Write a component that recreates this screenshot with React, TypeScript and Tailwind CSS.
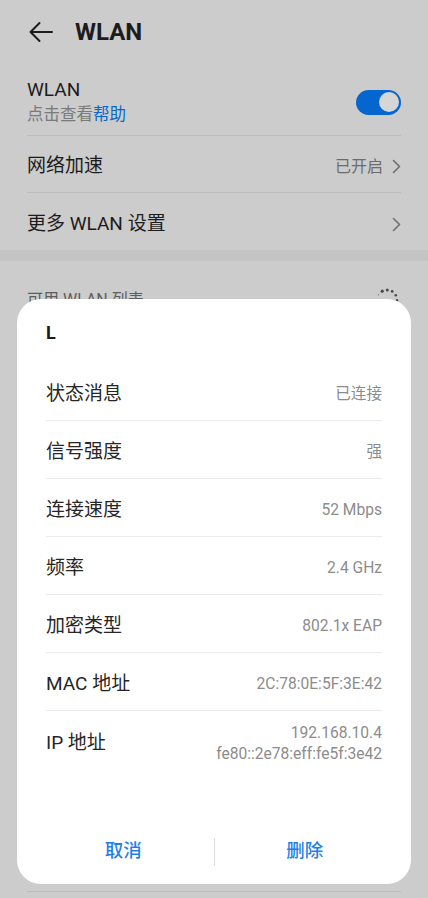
import type { ReactNode } from 'react';

const font = "font-['Roboto','Noto_Sans_CJK_SC',sans-serif]";

function Chevron() {
  return (
    <svg width="9" height="15" viewBox="0 0 9 15" fill="none" className="shrink-0">
      <path d="M1.5 1.5 L7.5 7.5 L1.5 13.5" stroke="#6f6f6f" strokeWidth="1.6" strokeLinecap="round" strokeLinejoin="round" />
    </svg>
  );
}

function Spinner() {
  const dots = Array.from({ length: 12 }, (_, i) => i);
  return (
    <svg width="24" height="24" viewBox="0 0 24 24">
      {dots.map((i) => {
        const a = (i / 12) * Math.PI * 2 - Math.PI / 2;
        const r = 1.6 - i * 0.1;
        return (
          <circle key={i} cx={12 + Math.cos(a - 0.5) * 10} cy={12 + Math.sin(a - 0.5) * 10} r={Math.max(r, 0.5)} fill="#4a4a4a" />
        );
      })}
    </svg>
  );
}

function InfoRow({ label, children, last }: { label: string; children: ReactNode; last?: boolean }) {
  return (
    <div className={`flex items-center justify-between pt-[5px] ${last ? 'h-[60px]' : 'h-[58px] border-b border-[#ebebeb]'}`}>
      <span className="text-[19px] text-[#262626]">{label}</span>
      <div className="text-right text-[15.6px] leading-[21px] text-[#8c8c8c]">{children}</div>
    </div>
  );
}

export default function App() {
  return (
    <div className={`relative flex h-[898px] flex-col overflow-hidden bg-[#cccccc] ${font}`}>
      {/* header */}
      <div className="flex h-[64px] shrink-0 items-center gap-[22px] px-[28px]">
        <svg width="25" height="24" viewBox="0 0 25 24" fill="none">
          <path d="M24 12H2.5 M11.5 3 L2.5 12 L11.5 21" stroke="#1c1c1c" strokeWidth="2" strokeLinecap="round" strokeLinejoin="round" />
        </svg>
        <h1 className="text-[24px] font-bold text-[#1c1c1c]">WLAN</h1>
      </div>

      {/* settings */}
      <div className="mx-[27px] flex shrink-0 flex-col">
        <div className="flex items-center justify-between border-b border-[#bdbdbd] pt-[15px] pb-[10px]">
          <div className="flex flex-col gap-[4px]">
            <span className="text-[19px] leading-[22px] text-[#1c1c1c]">WLAN</span>
            <span className="text-[16.5px] leading-[20px] text-[#7a7a7a]">
              点击查看<span className="text-[#0a66cc]">帮助</span>
            </span>
          </div>
          <div className="flex h-[25px] w-[45px] items-center justify-end rounded-full bg-[#0666d0] px-[2.5px]">
            <div className="h-[20px] w-[20px] rounded-full bg-[#d6d6d6]" />
          </div>
        </div>
        <div className="flex h-[57px] items-center justify-between border-b border-[#bdbdbd] pt-[5px]">
          <span className="text-[19px] text-[#1c1c1c]">网络加速</span>
          <div className="flex items-center gap-[9px]">
            <span className="text-[16px] text-[#6c6c6c]">已开启</span>
            <Chevron />
          </div>
        </div>
        <div className="flex h-[57px] items-center justify-between pt-[5px]">
          <span className="text-[19px] text-[#1c1c1c]">更多 WLAN 设置</span>
          <Chevron />
        </div>
      </div>

      <div className="h-[11px] shrink-0 bg-[#c4c4c4]" />

      {/* available list header (behind dialog) */}
      <div className="mx-[27px] flex shrink-0 items-center justify-between pt-[27px]">
        <span className="text-[16px] leading-[22px] text-[#5e5e5e]">可用 WLAN 列表</span>
        <div className="mr-[2px]">
          <Spinner />
        </div>
      </div>

      <div className="flex-1" />
      <div className="mx-[27px] mb-[6px] shrink-0 border-b border-[#bdbdbd]" />

      {/* dialog */}
      <div className="absolute left-[17px] top-[299px] flex h-[585px] w-[394px] flex-col rounded-[24px] bg-white">
        <div className="px-[29px] pt-[22px] pb-[18px]">
          <h2 className="text-[18px] font-bold leading-[24px] text-[#1a1a1a]">L</h2>
        </div>
        <div className="flex flex-col px-[29px]">
          <InfoRow label="状态消息">已连接</InfoRow>
          <InfoRow label="信号强度">强</InfoRow>
          <InfoRow label="连接速度">52 Mbps</InfoRow>
          <InfoRow label="频率">2.4 GHz</InfoRow>
          <InfoRow label="加密类型">802.1x EAP</InfoRow>
          <InfoRow label="MAC 地址">2C:78:0E:5F:3E:42</InfoRow>
          <InfoRow label="IP 地址" last>
            <div>192.168.10.4</div>
            <div>fe80::2e78:eff:fe5f:3e42</div>
          </InfoRow>
        </div>
        <div className="mt-auto mb-[4px] flex h-[56px] items-center px-[16px]">
          <button className="flex-1 text-[18.5px] font-medium text-[#1f7fe8]">取消</button>
          <div className="h-[28px] w-px bg-[#dcdcdc]" />
          <button className="flex-1 text-[18.5px] font-medium text-[#1f7fe8]">删除</button>
        </div>
      </div>
    </div>
  );
}
